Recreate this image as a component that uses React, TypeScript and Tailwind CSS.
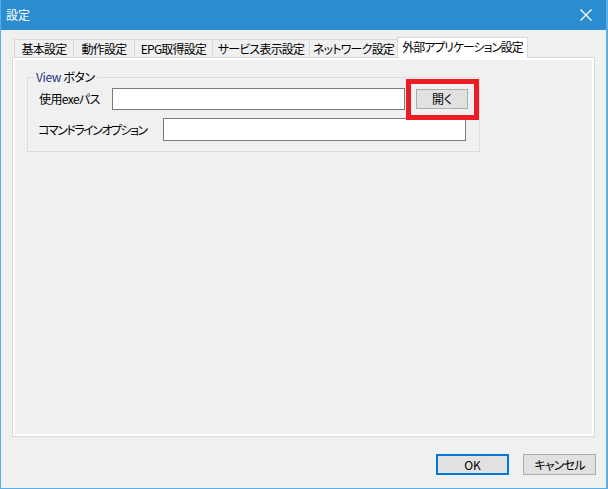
import React from "react";

const font = "font-['Noto_Sans_CJK_JP',sans-serif] [font-feature-settings:'palt']";

function Tab({ label, w, last }: { label: string; w: string; last?: boolean }) {
  return (
    <div
      className={`${w} h-[18px] flex items-center justify-center border-t border-l ${last ? "border-r" : ""} border-[#d9d9d9] bg-[#f0f0f0] text-[12px] tracking-[-0.8px] leading-none text-black whitespace-nowrap`}
    >
      {label}
    </div>
  );
}

export default function App() {
  return (
    <div className={`w-[608px] h-[489px] flex flex-col bg-[#f0f0f0] border-l border-r-2 border-b border-[#5aaee8] ${font}`}>
      {/* title bar */}
      <div className="h-[30px] shrink-0 bg-[#2b8dd0] flex items-center justify-between pl-[5px] pr-[14px]">
        <span className="text-white text-[12px] leading-none">設定</span>
        <svg width="12" height="12" viewBox="0 0 12 12" className="block">
          <path d="M0.5 0.5 L11.5 11.5 M11.5 0.5 L0.5 11.5" stroke="white" strokeWidth="1.2" fill="none" />
        </svg>
      </div>

      {/* content */}
      <div className="flex-1 flex flex-col pl-[11px] pt-[7px]">
        {/* tabs */}
        <div className="relative z-10 flex items-end h-[20px] ml-[2px]">
          <Tab label="基本設定" w="w-[59px]" />
          <Tab label="動作設定" w="w-[61px]" />
          <Tab label="EPG取得設定" w="w-[78px]" />
          <Tab label="サービス表示設定" w="w-[97px]" />
          <Tab label="ネットワーク設定" w="w-[88px]" />
          <div className="w-[131px] h-[21px] -mb-px flex items-center justify-center border-t border-l border-r border-[#d9d9d9] bg-white text-[12px] tracking-[-1.1px] leading-none text-black whitespace-nowrap pb-[2px]">
            外部アプリケーション設定
          </div>
        </div>

        {/* panel */}
        <div className="w-[583px] h-[380px] border border-[#d9d9d9] shadow-[inset_0_0_0_2px_#ffffff] bg-[#f0f0f0] pl-[14px] pt-[11px]">
          <fieldset className="w-[453px] border border-[#dcdcdc] px-0 pb-[10px] pt-[3px] m-0">
            <legend className="ml-[6px] px-[2px] text-[12px] leading-[16px] text-black tracking-[-0.4px]">
              <span className="text-[#1c3480]">View</span> ボタン
            </legend>
            <div className="flex items-center pl-[11px]">
              <span className="w-[73px] text-[12px] tracking-[-0.6px] leading-none text-black whitespace-nowrap">使用exeパス</span>
              <div className="w-[293px] h-[22px] border border-[#7a7a7a] bg-white" />
              <div className="relative ml-[11px]">
                <button className="w-[52px] h-[20px] bg-[#e1e1e1] border border-[#adadad] text-[12px] leading-none text-black flex items-center justify-center">
                  開く
                </button>
                <div className="absolute -left-[10px] -top-[10px] w-[73px] h-[41px] border-[5px] border-[#ed1c24] pointer-events-none" />
              </div>
            </div>
            <div className="flex items-center pl-[10px] mt-[8px]">
              <span className="w-[125px] text-[12px] tracking-[-1.5px] leading-none text-black whitespace-nowrap">コマンドラインオプション</span>
              <div className="w-[303px] h-[23px] border border-[#7a7a7a] bg-white" />
            </div>
          </fieldset>
        </div>

        {/* footer */}
        <div className="flex justify-end gap-[14px] pt-[17px] pr-[10px]">
          <button className="w-[73px] h-[21px] bg-[#e1e1e1] border-2 border-[#0078d7] text-[12px] leading-none text-black flex items-center justify-center">
            OK
          </button>
          <button className="w-[73px] h-[21px] bg-[#e1e1e1] border border-[#adadad] text-[12px] tracking-[-0.8px] leading-none text-black flex items-center justify-center">
            キャンセル
          </button>
        </div>
      </div>
    </div>
  );
}
